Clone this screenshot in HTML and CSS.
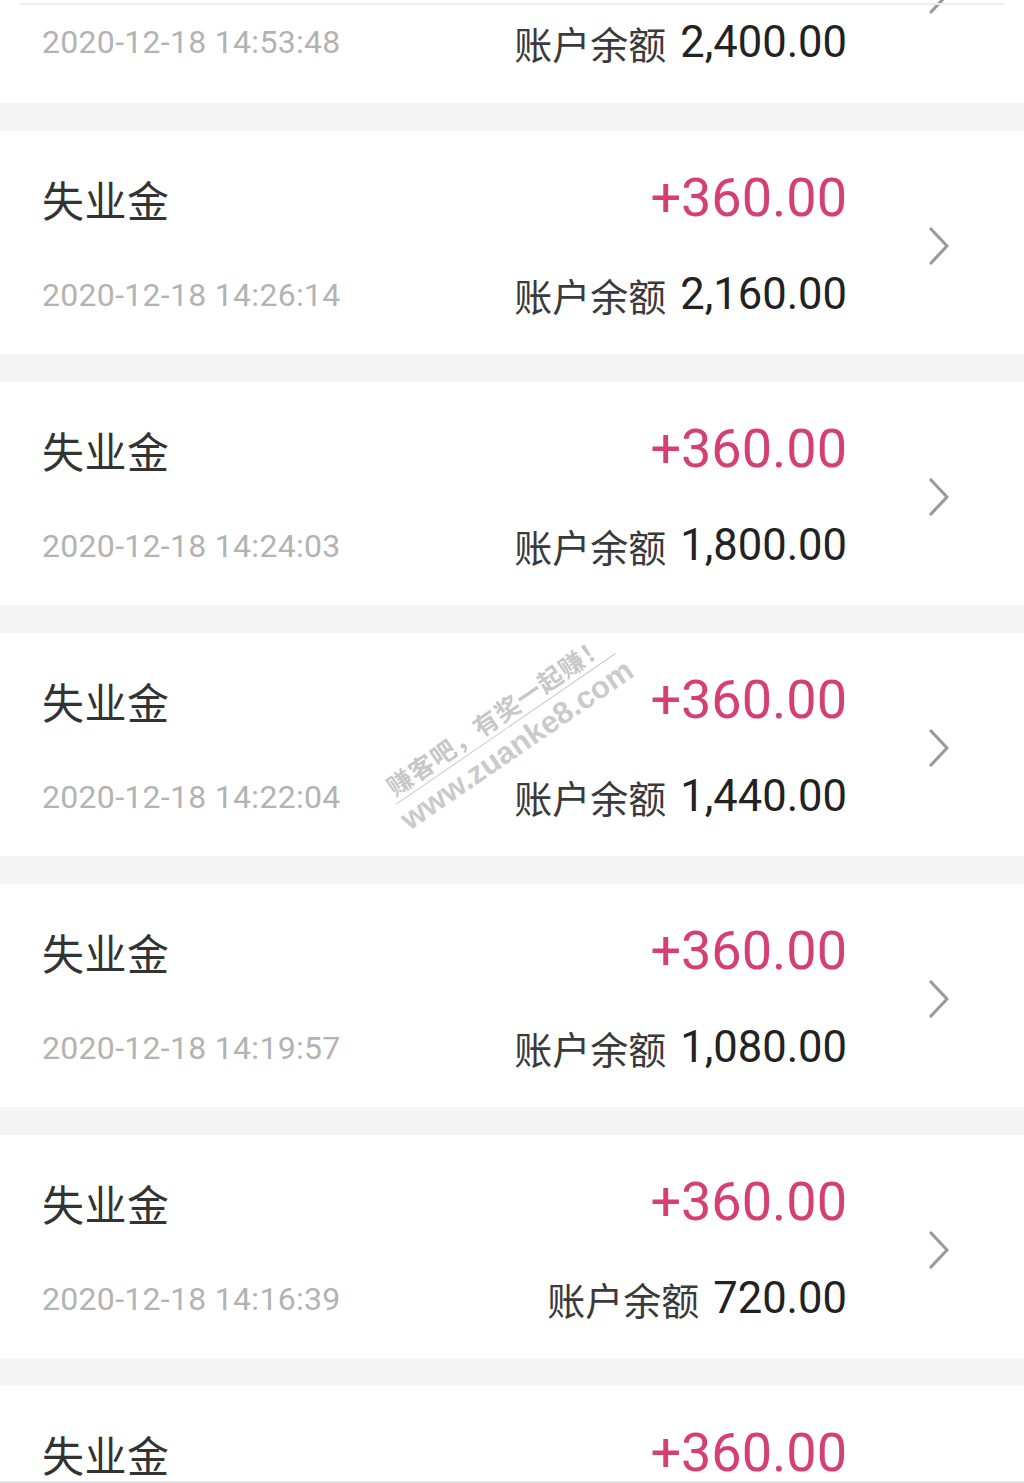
FILE: index.html
```html
<!DOCTYPE html>
<html lang="zh-CN">
<head>
<meta charset="utf-8">
<title>账户明细</title>
<link rel="stylesheet" href="styles.css">
</head>
<body>
<div class="page">
  <div class="top-edge"></div>

  <div class="list">
    <div class="card card-first">
      <div class="info">
        <div class="row"><span class="date">2020-12-18 14:53:48</span><span class="balance"><span class="label">账户余额</span><span class="num">2,400.00</span></span></div>
      </div>
      <svg class="chev" viewBox="0 0 22 38" width="22" height="38"><path d="M3 2 L19 19 L3 36" fill="none" stroke="#9a9a9a" stroke-width="3.2" stroke-linecap="round" stroke-linejoin="round"/></svg>
    </div>

    <div class="card">
      <div class="info">
        <div class="row"><span class="title">失业金</span><span class="amount">+360.00</span></div>
        <div class="row"><span class="date">2020-12-18 14:26:14</span><span class="balance"><span class="label">账户余额</span><span class="num">2,160.00</span></span></div>
      </div>
      <svg class="chev" viewBox="0 0 22 38" width="22" height="38"><path d="M3 2 L19 19 L3 36" fill="none" stroke="#9a9a9a" stroke-width="3.2" stroke-linecap="round" stroke-linejoin="round"/></svg>
    </div>

    <div class="card">
      <div class="info">
        <div class="row"><span class="title">失业金</span><span class="amount">+360.00</span></div>
        <div class="row"><span class="date">2020-12-18 14:24:03</span><span class="balance"><span class="label">账户余额</span><span class="num">1,800.00</span></span></div>
      </div>
      <svg class="chev" viewBox="0 0 22 38" width="22" height="38"><path d="M3 2 L19 19 L3 36" fill="none" stroke="#9a9a9a" stroke-width="3.2" stroke-linecap="round" stroke-linejoin="round"/></svg>
    </div>

    <div class="card">
      <div class="info">
        <div class="row"><span class="title">失业金</span><span class="amount">+360.00</span></div>
        <div class="row"><span class="date">2020-12-18 14:22:04</span><span class="balance"><span class="label">账户余额</span><span class="num">1,440.00</span></span></div>
      </div>
      <svg class="chev" viewBox="0 0 22 38" width="22" height="38"><path d="M3 2 L19 19 L3 36" fill="none" stroke="#9a9a9a" stroke-width="3.2" stroke-linecap="round" stroke-linejoin="round"/></svg>
    </div>

    <div class="card">
      <div class="info">
        <div class="row"><span class="title">失业金</span><span class="amount">+360.00</span></div>
        <div class="row"><span class="date">2020-12-18 14:19:57</span><span class="balance"><span class="label">账户余额</span><span class="num">1,080.00</span></span></div>
      </div>
      <svg class="chev" viewBox="0 0 22 38" width="22" height="38"><path d="M3 2 L19 19 L3 36" fill="none" stroke="#9a9a9a" stroke-width="3.2" stroke-linecap="round" stroke-linejoin="round"/></svg>
    </div>

    <div class="card">
      <div class="info">
        <div class="row"><span class="title">失业金</span><span class="amount">+360.00</span></div>
        <div class="row"><span class="date">2020-12-18 14:16:39</span><span class="balance"><span class="label">账户余额</span><span class="num">720.00</span></span></div>
      </div>
      <svg class="chev" viewBox="0 0 22 38" width="22" height="38"><path d="M3 2 L19 19 L3 36" fill="none" stroke="#9a9a9a" stroke-width="3.2" stroke-linecap="round" stroke-linejoin="round"/></svg>
    </div>

    <div class="card card-last">
      <div class="info">
        <div class="row"><span class="title">失业金</span><span class="amount">+360.00</span></div>
      </div>
      <span class="chev-space"></span>
    </div>
  </div>

  <div class="watermark">
    <div class="wm-line1">赚客吧，有奖一起赚！</div>
    <div class="wm-rule"></div>
    <div class="wm-line2">www.zuanke8.com</div>
  </div>

  <div class="bottom-edge"></div>
</div>
</body>
</html>
```

FILE: styles.css
```css
html, body {
  margin: 0;
  padding: 0;
}

body {
  background: #f4f4f4;
  font-family: Roboto, "Noto Sans CJK SC", sans-serif;
}

.page {
  position: relative;
  width: 1024px;
  height: 1483px;
  overflow: hidden;
  background: #f4f4f4;
}

.list {
  display: flex;
  flex-direction: column;
  gap: 27.6px;
}

.card {
  background: #ffffff;
  height: 223.4px;
  flex: none;
  box-sizing: border-box;
  display: flex;
  align-items: center;
  padding: 0 74px 0 42px;
}

.card-first {
  height: 103px;
  align-items: flex-start;
}

.card-first .info {
  padding-top: 0;
}

.card-first .row {
  height: 84px;
}

.card-first .chev {
  margin-top: -24px;
}

.info {
  flex: 1;
  align-self: flex-start;
  padding-top: 20px;
}

.row {
  height: 96px;
  display: flex;
  align-items: center;
  justify-content: space-between;
}

.title {
  font-family: "Noto Sans CJK SC", sans-serif;
  font-size: 42px;
  color: #333333;
  letter-spacing: 0.5px;
}

.amount {
  font-family: Roboto, sans-serif;
  font-size: 54px;
  color: #d63f72;
  margin-top: -2px;
}

.date {
  font-family: Roboto, sans-serif;
  font-size: 32px;
  color: #b3b3b3;
  letter-spacing: 0.3px;
}

.balance {
  display: flex;
  align-items: center;
  gap: 14px;
}

.label {
  font-family: "Noto Sans CJK SC", sans-serif;
  font-size: 38px;
  color: #3a3a3a;
}

.num {
  font-family: Roboto, sans-serif;
  font-size: 43.5px;
  color: #222222;
}

.chev {
  flex: none;
  margin-left: 81px;
  margin-top: 7px;
}

.chev-space {
  flex: none;
  width: 22px;
  margin-left: 81px;
}

.top-edge {
  position: absolute;
  top: 3px;
  left: 20px;
  width: 984px;
  height: 2px;
  background: #ececec;
  z-index: 2;
}

.bottom-edge {
  position: absolute;
  left: 0;
  bottom: 0;
  width: 1024px;
  height: 2px;
  background: #e4e4e4;
}

.watermark {
  position: absolute;
  left: 368px;
  top: 696px;
  width: 278px;
  transform: rotate(-34.5deg);
  transform-origin: center center;
  text-align: center;
  pointer-events: none;
}

.wm-line1 {
  font-family: "Noto Sans CJK SC", sans-serif;
  font-size: 25px;
  font-weight: 700;
  color: rgba(150, 150, 150, 0.55);
  letter-spacing: 1px;
  line-height: 30px;
  text-shadow: 0 0 2px #ffffff;
}

.wm-rule {
  height: 1px;
  margin: 2px 6px;
  background: rgba(150, 150, 150, 0.5);
}

.wm-line2 {
  font-family: "Liberation Sans", Arial, sans-serif;
  font-size: 31px;
  font-weight: 700;
  color: rgba(150, 150, 150, 0.5);
  line-height: 34px;
  text-shadow: 0 0 2px #ffffff;
}
```
